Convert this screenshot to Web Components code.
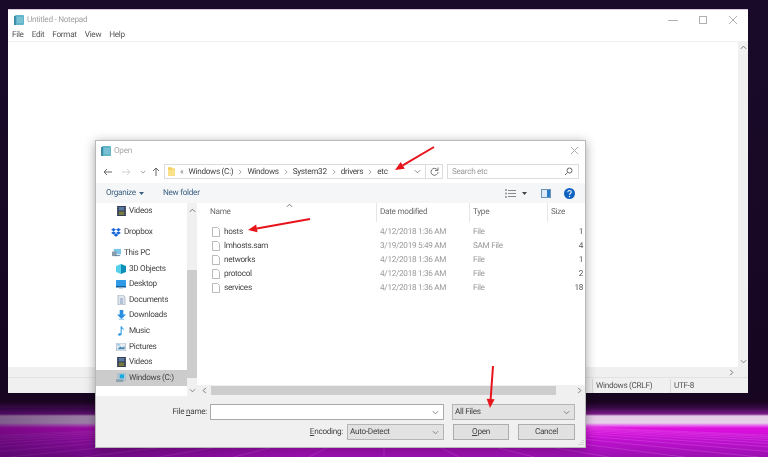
<!DOCTYPE html>
<html>
<head>
<meta charset="utf-8">
<title>Notepad - Open</title>
<style>
html, body { margin: 0; height: 100%; overflow: hidden; background: #14051f; }
body { font: 8.2px Roboto, "Open Sans", "Liberation Sans", sans-serif; letter-spacing: -.3px; text-rendering: geometricPrecision; color: #444; }
</style>
</head>
<body>
<win-desk>
  <note-window></note-window>
  <open-dialog></open-dialog>
  <red-arrow x1="434" y1="147" x2="395" y2="170"></red-arrow>
  <red-arrow x1="310" y1="219" x2="248" y2="230"></red-arrow>
  <red-arrow x1="493" y1="366" x2="490" y2="408"></red-arrow>
</win-desk>

<script>
var icons = {
  notepad: `<svg viewBox="0 0 12 12" width="12" height="12"><rect x="2" y="1" width="9" height="10" rx="1" fill="#62b4c8"/><rect x="1" y="2" width="2" height="9" fill="#3d8ca8"/><path d="M4 4h6M4 6h6M4 8h6" stroke="#a8dbe6" stroke-width=".7"/></svg>`,
  folder: `<svg viewBox="0 0 8 12" width="7" height="11"><path d="M0 1h4l1 1.500h3V11H0z" fill="#f6cf5a"/><path d="M0 4h8v7H0z" fill="#fbe08a"/></svg>`,
  video: `<svg viewBox="0 0 10 11" width="9" height="10"><rect width="10" height="11" fill="#2b3550"/><rect x="2" y="1" width="6" height="4" fill="#5a7aa0"/><rect x="2" y="6" width="6" height="4" fill="#777b3e"/><path d="M.8 1v9M9.200 1v9" stroke="#aab" stroke-width=".8" stroke-dasharray="1 1"/></svg>`,
  dropbox: `<svg viewBox="0 0 12 11" width="10" height="9"><path d="M3 0l3 2-3 2-3-2zM9 0l3 2-3 2-3-2zM3 4l3 2-3 2-3-2zM9 4l3 2-3 2-3-2zM3 8.700l3-1.900 3 1.900-3 2z" fill="#1565d8"/></svg>`,
  pc: `<svg viewBox="0 0 10 10" width="9" height="9"><rect x="2" y="1" width="8" height="6" fill="#7cc4e8"/><rect x="0" y="4" width="5" height="5" fill="#8a9aa8"/><rect x="3" y="8" width="6" height="1" fill="#5a7a98"/></svg>`,
  objects: `<svg viewBox="0 0 10 10" width="10" height="10"><path d="M5 0l5 2v6l-5 2z" fill="#0f8fb8"/><path d="M5 0L0 2v6l5 2z" fill="#55d0ea"/></svg>`,
  desktop: `<svg viewBox="0 0 10 9" width="10" height="9"><rect width="10" height="7" rx=".5" fill="#2f9ae6"/><rect y="6" width="10" height="1.500" fill="#10609c"/><rect x="3" y="7.500" width="4" height="1" fill="#9ab"/></svg>`,
  documents: `<svg viewBox="0 0 9 10" width="9" height="10"><path d="M1 0h5l2 2v8H1z" fill="#dfe6ee" stroke="#8fa0b4" stroke-width=".6"/><path d="M3 4h3M3 6h3M3 8h3" stroke="#6a8ab0" stroke-width=".8"/></svg>`,
  downloads: `<svg viewBox="0 0 10 11" width="9" height="10"><path d="M3 0h4v5h3l-5 5-5-5h3z" fill="#2a8fe0"/><rect x="2" y="9.600" width="6" height="1.200" fill="#8ac4f0"/></svg>`,
  music: `<svg viewBox="0 0 8 11" width="7" height="10"><path d="M3 0h1.200c.2 2 3.300 2.500 2.800 5-.5-1.500-1.800-2-2.800-2v6c0 1-1.200 2-2.500 2C.6 11 0 10.300 0 9.600 0 8.600 1.600 7.800 3 8.300z" fill="#2a9ae8"/></svg>`,
  pictures: `<svg viewBox="0 0 10 9" width="10" height="8"><rect width="10" height="9" fill="#e4ecf2" stroke="#8fa0b4" stroke-width=".6"/><path d="M1 7l3-3 2 1 3-1v3z" fill="#4a88b8"/><rect x="1" y="1" width="3" height="2" fill="#9cc8e8"/></svg>`,
  drive: `<svg viewBox="0 0 11 10" width="10" height="9"><rect x="2" y="0" width="9" height="8" rx="1" fill="#bcd0dc" stroke="#7b98aa" stroke-width=".5"/><rect x="4" y="1.500" width="5" height="4.500" fill="#18a8dc"/><rect x="0" y="7" width="8" height="3" rx=".6" fill="#8aa2b2"/></svg>`,
  file: `<svg viewBox="0 0 8 10" width="8" height="10"><path d="M.5.500h5l2 2v7h-7z" fill="#fff" stroke="#aaa" stroke-width=".8"/></svg>`,
  chevDown: `<svg viewBox="0 0 8 5" width="7" height="5"><path d="M1 1l3 3 3-3" fill="none" stroke="#777" stroke-width="1"/></svg>`,
  chevUp: `<svg viewBox="0 0 8 5" width="7" height="5"><path d="M1 4l3-3 3 3" fill="none" stroke="#666" stroke-width="1"/></svg>`,
  chevLeft: `<svg viewBox="0 0 5 8" width="5" height="7"><path d="M4 1L1 4l3 3" fill="none" stroke="#666" stroke-width="1"/></svg>`,
  chevRight: `<svg viewBox="0 0 5 8" width="5" height="7"><path d="M1 1l3 3-3 3" fill="none" stroke="#666" stroke-width="1"/></svg>`
}

class winDesk extends HTMLElement {
  connectedCallback() {
    var shadow = this.attachShadow({mode: 'open'})
    var lines = ''
    for(var i = -12; i <= 12; i++) {
      lines += `<line x1="${384 + i * 12}" y1="425" x2="${384 + i * 75}" y2="457"/>`
    }
    shadow.innerHTML = `
<style>
:host {
  display: block;
  position: relative;
  width: 768px;
  height: 457px;
  overflow: hidden;
  filter: blur(.35px);
  background: linear-gradient(#1a0a2a 0, #170622 395px, #1a0520 402px, #3a0a48 408px, #7a1a88 414px, #e4cce6 416px, #e6d0ea 423px, #e87af0 425px, #e010e0 428px, #c010d0 440px, #9a10b0 457px);
}
.glow {
  position: absolute;
  left: 0;
  top: 408px;
  width: 300px;
  height: 49px;
  background: linear-gradient(90deg, rgba(40,0,60,.55), rgba(40,0,60,0));
}
svg { position: absolute; left: 0; top: 0; }
line { stroke: #e888f0; stroke-width: .6; opacity: .4; }
</style>
<svg width="768" height="457">${lines}</svg>
<div class="glow"></div>
<slot></slot>`
  }
}
customElements.define('win-desk', winDesk)

class noteWindow extends HTMLElement {
  connectedCallback() {
    var shadow = this.attachShadow({mode: 'open'})
    shadow.innerHTML = `
<style>
:host {
  position: absolute;
  left: 8px;
  top: 9px;
  width: 740px;
  height: 384px;
  display: flex;
  flex-direction: column;
  background: #fff;
  border-top: 1px solid #d8c8d8;
  box-sizing: border-box;
}
.title { height: 19px; display: flex; align-items: center; padding-left: 5px; gap: 2px; color: #a2a2a2; flex: none; }
.title span { flex: 1; }
.ctl { width: 30px; height: 18px; display: flex; align-items: center; justify-content: center; }
.ctl svg { display: block; }
.ctls { display: flex; }
.menu { height: 12px; display: flex; align-items: center; gap: 8px; padding-left: 4px; color: #555; border-bottom: 1px solid #efefef; flex: none; }
.edit { flex: 1; display: flex; min-height: 0; }
.page { flex: 1; }
.vbar { width: 10px; background: #f0f0f0; display: flex; flex-direction: column; justify-content: space-between; align-items: center; padding: 3px 0; }
.hbar { height: 10px; flex: none; background: #f0f0f0; display: flex; justify-content: flex-end; align-items: center; padding-right: 14px; }
.status { height: 15px; flex: none; background: #f0f0f0; border-top: 1px solid #e2e2e2; display: flex; color: #555; align-items: center; position: relative; }
.status .pad { width: 584px; }
.status div { border-left: 1px solid #d8d8d8; height: 14px; line-height: 14px; padding-left: 3px; }
.status .crlf { width: 74px; }
.status .enc { flex: 1; }
</style>
<div class="title">${icons.notepad}<span>Untitled - Notepad</span>
  <div class="ctls">
    <div class="ctl"><svg width="10" height="10"><path d="M0 5.500h10" stroke="#b0b0b0"/></svg></div>
    <div class="ctl"><svg width="10" height="10"><rect x="1.500" y="1.500" width="7" height="7" fill="none" stroke="#b0b0b0"/></svg></div>
    <div class="ctl"><svg width="10" height="10"><path d="M1 1l8 8M9 1L1 9" stroke="#b0b0b0"/></svg></div>
  </div>
</div>
<div class="menu"><span>File</span><span>Edit</span><span>Format</span><span>View</span><span>Help</span></div>
<div class="edit"><div class="page"></div><div class="vbar">${icons.chevUp}${icons.chevDown}</div></div>
<div class="hbar">${icons.chevRight}</div>
<div class="status"><span class="pad"></span><div class="crlf">Windows (CRLF)</div><div class="enc">UTF-8</div></div>`
  }
}
customElements.define('note-window', noteWindow)

class navItem extends HTMLElement {
  connectedCallback() {
    var shadow = this.attachShadow({mode: 'open'})
    var indent = this.getAttribute('indent') || '20'
    shadow.innerHTML = `
<style>
:host { display: flex; align-items: center; height: 15.600px; color: #444; white-space: nowrap; }
:host([selected]) { background: #cccccc; }
i { display: flex; width: 10px; justify-content: center; margin: 0 3px 0 ${indent}px; }
</style>
<i>${icons[this.getAttribute('icon')]}</i><span><slot></slot></span>`
  }
}
customElements.define('nav-item', navItem)

class fileRow extends HTMLElement {
  connectedCallback() {
    var shadow = this.attachShadow({mode: 'open'})
    shadow.innerHTML = `
<style>
:host { display: grid; grid-template-columns: 183px 93px 79px 31px; height: 14.200px; align-items: center; white-space: nowrap; color: #9a9a9a; }
.name { display: flex; align-items: center; gap: 4px; padding-left: 15px; color: #444; }
svg { display: block; }
.size { text-align: right; color: #555; }
</style>
<div class="name">${icons.file}<span><slot></slot></span></div>
<div>${this.getAttribute('date')}</div>
<div>${this.getAttribute('type')}</div>
<div class="size">${this.getAttribute('size')}</div>`
  }
}
customElements.define('file-row', fileRow)

class comboBox extends HTMLElement {
  connectedCallback() {
    var shadow = this.attachShadow({mode: 'open'})
    shadow.innerHTML = `
<style>
:host { display: flex; align-items: center; justify-content: space-between; box-sizing: border-box; height: 16px; border: 1px solid #b5b5b5; background: #e2e2e2; padding: 0 4px 0 2px; color: #444; }
:host([white]) { background: #fff; border-color: #aaa; }
</style>
<span><slot></slot></span>${icons.chevDown}`
  }
}
customElements.define('combo-box', comboBox)

class winButton extends HTMLElement {
  connectedCallback() {
    var shadow = this.attachShadow({mode: 'open'})
    shadow.innerHTML = `
<style>
:host { display: flex; align-items: center; justify-content: center; box-sizing: border-box; height: 16px; border: 1px solid #adadad; background: #e1e1e1; color: #444; }
</style>
<slot></slot>`
  }
}
customElements.define('win-button', winButton)

class openDialog extends HTMLElement {
  connectedCallback() {
    var shadow = this.attachShadow({mode: 'open'})
    var crumb = `<svg viewBox="0 0 5 8" width="4" height="6"><path d="M1 1l3 3-3 3" fill="none" stroke="#888"/></svg>`
    shadow.innerHTML = `
<style>
:host {
  position: absolute;
  left: 95px;
  top: 140px;
  width: 491px;
  height: 308px;
  box-sizing: border-box;
  border: 1px solid #b8b8b8;
  background: #fff;
  display: flex;
  flex-direction: column;
  box-shadow: 0 2px 10px rgba(0,0,0,.35);
  color: #444;
}
svg { display: block; flex: none; }
.title { height: 19px; flex: none; display: flex; align-items: center; gap: 2px; padding-left: 4px; color: #a8a8a8; }
.title span { flex: 1; }
.title .x { margin-right: 6px; }
.nav { height: 23px; flex: none; display: flex; align-items: center; }
.navbtns { display: flex; align-items: center; width: 68px; flex: none; }
.navbtns svg:nth-child(1) { margin-left: 7px; }
.navbtns svg:nth-child(2) { margin-left: 10px; }
.navbtns svg:nth-child(3) { margin-left: 9px; }
.navbtns svg:nth-child(4) { margin-left: 6px; }
.addr { width: 279px; flex: none; height: 15px; box-sizing: border-box; border: 1px solid #dcdcdc; display: flex; align-items: center; padding-left: 3px; gap: 5px; white-space: nowrap; }
.addr .grow { flex: 1; }
.addr .more { color: #777; }
.addr .sep { width: 16px; height: 13px; border-left: 1px solid #dcdcdc; display: flex; align-items: center; justify-content: center; }
.addr .down { margin-right: -1px; }
.search { margin-left: 4px; width: 132px; height: 15px; box-sizing: border-box; border: 1px solid #dcdcdc; display: flex; align-items: center; justify-content: space-between; padding: 0 5px 0 4px; color: #9a9a9a; }
.tools { height: 20px; flex: none; background: #f5f6f7; display: flex; align-items: center; color: #3a5f80; padding-left: 10px; }
.tools .org { display: flex; align-items: center; gap: 3px; width: 57px; }
.tools .right { margin-left: auto; display: flex; align-items: center; }
.main { flex: 1; display: flex; min-height: 0; }
.pane { width: 91px; flex: none; overflow: hidden; }
.gap6 { margin-top: 6px; }
.gap5 { margin-top: 5px; }
.navbar { width: 10px; flex: none; background: #f0f0f0; display: flex; flex-direction: column; align-items: center; padding-top: 5px; box-sizing: border-box; }
.navbar .thumb { width: 10px; height: 108px; background: #cdcdcd; margin-top: 57px; }
.navbar .dn { margin-top: 10px; }
.list { flex: 1; min-width: 0; display: flex; flex-direction: column; overflow: hidden; }
.head { position: relative; height: 19px; flex: none; display: grid; grid-template-columns: 179px 93px 78px 1fr; align-items: center; color: #6a6a6a; }
.head div { padding-left: 3px; height: 19px; line-height: 19px; border-left: 1px solid #e6e6e6; }
.head div:first-child { border-left: 0; padding-left: 13px; }
.head svg { position: absolute; left: 89px; top: 0; }
.rows { flex: 1; padding-top: 2.500px; }
.hbar { height: 11px; flex: none; display: flex; align-items: center; background: #f0f0f0; }
.hbar .thumb { width: 345px; height: 9px; background: #cdcdcd; margin: 0 auto 0 4px; }
.hbar svg:first-child { margin-left: 5px; }
.hbar svg:last-child { margin-right: 3px; }
.bottom { height: 51px; flex: none; background: #f0f0f0; box-sizing: border-box; padding: 8px 10px 0 0; display: flex; flex-direction: column; gap: 4px; position: relative; }
.line { display: flex; justify-content: flex-end; align-items: center; }
u { text-decoration: underline; }
.grip { position: absolute; right: 1px; bottom: 1px; }
</style>
<div class="title">${icons.notepad}<span>Open</span><svg class="x" width="9" height="9"><path d="M1 1l7 7M8 1L1 8" stroke="#aaa"/></svg></div>
<div class="nav">
  <div class="navbtns">
    <svg width="9" height="8"><path d="M9 4H1M4 1L1 4l3 3" fill="none" stroke="#666"/></svg>
    <svg width="9" height="8"><path d="M0 4h8M5 1l3 3-3 3" fill="none" stroke="#d2d2d2"/></svg>
    <svg viewBox="0 0 8 5" width="6" height="4"><path d="M1 1l3 3 3-3" fill="none" stroke="#888"/></svg>
    <svg width="8" height="9"><path d="M4 9V1M1 4l3-3 3 3" fill="none" stroke="#666"/></svg>
  </div>
  <div class="addr">
    ${icons.folder}
    <span class="more">«</span>
    <span>Windows (C:)</span>${crumb}<span>Windows</span>${crumb}<span>System32</span>${crumb}<span>drivers</span>${crumb}<span>etc</span>
    <span class="grow"></span>
    <span class="down">${icons.chevDown}</span>
    <span class="sep"><svg width="9" height="9" viewBox="0 0 9 9"><path d="M7.500 3A3.500 3.500 0 1 0 8 5" fill="none" stroke="#777"/><path d="M8 .5v3H5" fill="none" stroke="#777"/></svg></span>
  </div>
  <div class="search"><span>Search etc</span><svg width="9" height="9"><circle cx="5.500" cy="3.500" r="2.500" fill="none" stroke="#666"/><path d="M3.500 5.500L1 8" stroke="#666"/></svg></div>
</div>
<div class="tools">
  <div class="org"><span>Organize</span><svg width="5" height="3"><path d="M0 0h5L2.500 3z" fill="#3a5f80"/></svg></div>
  <span>New folder</span>
  <div class="right">
    <svg width="11" height="9"><path d="M3 1.500h8M3 4.500h8M3 7.500h8" stroke="#8a8a8a"/><path d="M0 0h2v2H0zM0 3.500h2v2H0zM0 7h2v2H0z" fill="#a8a8a8"/></svg>
    <svg style="margin-left:6px" width="5" height="3"><path d="M0 0h5L2.500 3z" fill="#444"/></svg>
    <svg style="margin-left:14px" width="10" height="9"><rect x=".5" y=".5" width="9" height="8" fill="#dfeaf4" stroke="#6a93b8"/><rect x="6" y="1" width="3" height="7" fill="#2a7cc8"/></svg>
    <svg style="margin:0 10px 0 13px" width="11" height="11" viewBox="0 0 11 11"><circle cx="5.500" cy="5.500" r="5.500" fill="#0f62c0"/><path d="M3.800 4.200c0-2.200 3.500-2.200 3.500-.1 0 1.400-1.800 1.400-1.800 2.700" fill="none" stroke="#fff" stroke-width="1.100"/><circle cx="5.500" cy="8.500" r=".7" fill="#fff"/></svg>
  </div>
</div>
<div class="main">
  <div class="pane">
    <nav-item icon="video">Videos</nav-item>
    <nav-item class="gap6" icon="dropbox" indent="15">Dropbox</nav-item>
    <nav-item class="gap5" icon="pc" indent="15">This PC</nav-item>
    <nav-item icon="objects">3D Objects</nav-item>
    <nav-item icon="desktop">Desktop</nav-item>
    <nav-item icon="documents">Documents</nav-item>
    <nav-item icon="downloads">Downloads</nav-item>
    <nav-item icon="music">Music</nav-item>
    <nav-item icon="pictures">Pictures</nav-item>
    <nav-item icon="video">Videos</nav-item>
    <nav-item icon="drive" selected>Windows (C:)</nav-item>
  </div>
  <div class="navbar">${icons.chevUp}<div class="thumb"></div><div class="dn">${icons.chevDown}</div></div>
  <div class="list">
    <div class="head">
      <div>Name</div><div>Date modified</div><div>Type</div><div>Size</div>
      ${icons.chevUp}
    </div>
    <div class="rows">
      <file-row date="4/12/2018 1:36 AM" type="File" size="1">hosts</file-row>
      <file-row date="3/19/2019 5:49 AM" type="SAM File" size="4">lmhosts.sam</file-row>
      <file-row date="4/12/2018 1:36 AM" type="File" size="1">networks</file-row>
      <file-row date="4/12/2018 1:36 AM" type="File" size="2">protocol</file-row>
      <file-row date="4/12/2018 1:36 AM" type="File" size="18">services</file-row>
    </div>
    <div class="hbar">${icons.chevLeft}<div class="thumb"></div>${icons.chevRight}</div>
  </div>
</div>
<div class="bottom">
  <div class="line">
    <span style="margin-right:3px">File <u>n</u>ame:</span>
    <combo-box white style="width:234px"></combo-box>
    <combo-box style="width:123px;margin-left:8px">All Files</combo-box>
  </div>
  <div class="line">
    <span style="margin-right:4px"><u>E</u>ncoding:</span>
    <combo-box style="width:97px">Auto-Detect</combo-box>
    <win-button style="width:56px;margin-left:9px"><span><u>O</u>pen</span></win-button>
    <win-button style="width:57px;margin-left:9px">Cancel</win-button>
  </div>
  <svg class="grip" width="7" height="7"><path d="M6 1v1M4 3v1M6 3v1M2 5v1M4 5v1M6 5v1" stroke="#b8b8b8"/></svg>
</div>`
  }
}
customElements.define('open-dialog', openDialog)

class redArrow extends HTMLElement {
  connectedCallback() {
    var shadow = this.attachShadow({mode: 'open'})
    var x1 = +this.getAttribute('x1'), y1 = +this.getAttribute('y1')
    var x2 = +this.getAttribute('x2'), y2 = +this.getAttribute('y2')
    var len = Math.hypot(x2 - x1, y2 - y1)
    var ux = (x2 - x1) / len, uy = (y2 - y1) / len
    var bx = x2 - ux * 9, by = y2 - uy * 9
    var head = [x2, y2, bx - uy * 4, by + ux * 4, bx + uy * 4, by - ux * 4].join(' ')
    shadow.innerHTML = `
<style>
:host { position: absolute; left: 0; top: 0; width: 768px; height: 457px; pointer-events: none; }
svg { display: block; }
</style>
<svg width="768" height="457"><line x1="${x1}" y1="${y1}" x2="${bx}" y2="${by}" stroke="#e8141c" stroke-width="2"/><polygon points="${head}" fill="#e8141c"/></svg>`
  }
}
customElements.define('red-arrow', redArrow)
</script>
</body>
</html>
